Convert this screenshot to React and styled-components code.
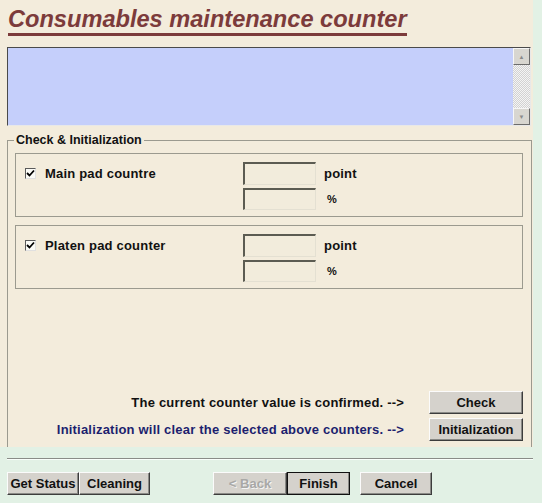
import styled, { createGlobalStyle } from "styled-components";

const GlobalStyle = createGlobalStyle`
  body {
    margin: 0;
    background: #e2f1e5;
    font-family: "Liberation Sans", Arial, sans-serif;
  }
`;

const counters = [
  { id: "main", label: "Main pad countre" },
  { id: "platen", label: "Platen pad counter" },
];

const App = () => {
  return (
    <Window>
      <GlobalStyle />
      <Panel>
        <Title>Consumables maintenance counter</Title>
        <LogBox>
          <LogText />
          <ScrollBar>
            <ScrollButton>▲</ScrollButton>
            <ScrollTrack />
            <ScrollButton>▼</ScrollButton>
          </ScrollBar>
        </LogBox>
        <Group>
          <Legend>Check &amp; Initialization</Legend>
          {counters.map(({ id, label }) => (
            <CounterBox key={id}>
              <CheckLabel>
                <CheckBox>
                  <svg width="9" height="9" viewBox="0 0 9 9">
                    <path d="M1 4 L3.5 6.5 L8 1.5" stroke="#000" strokeWidth="1.8" fill="none" />
                  </svg>
                </CheckBox>
                {label}
              </CheckLabel>
              <Field />
              <Unit>point</Unit>
              <span />
              <Field />
              <Unit $small>%</Unit>
            </CounterBox>
          ))}
          <Actions>
            <ActionRow>
              <ActionText>The current counter value is confirmed. --&gt;</ActionText>
              <Button $width={94}>Check</Button>
            </ActionRow>
            <ActionRow>
              <ActionText $navy>Initialization will clear the selected above counters. --&gt;</ActionText>
              <Button $width={94}>Initialization</Button>
            </ActionRow>
          </Actions>
        </Group>
      </Panel>
      <Separator />
      <Footer>
        <ButtonGroup>
          <Button $width={72}>Get Status</Button>
          <Button $width={71}>Cleaning</Button>
        </ButtonGroup>
        <ButtonGroup $gap={10}>
          <ButtonGroup>
            <Button $width={74} disabled>&lt; Back</Button>
            <Button $width={63} $default>Finish</Button>
          </ButtonGroup>
          <Button $width={72}>Cancel</Button>
        </ButtonGroup>
      </Footer>
    </Window>
  );
};

export default App;

const Window = styled.div`
  width: 542px;
  height: 503px;
  background: #e2f1e5;
  overflow: hidden;
`;

const Panel = styled.div`
  width: 533px;
  height: 447px;
  background: #f3ecdc;
  display: flex;
  flex-direction: column;
  box-sizing: border-box;
  padding-top: 6px;
`;

const Title = styled.h1`
  align-self: flex-start;
  margin: 0 0 0 8px;
  padding-bottom: 1px;
  font-size: 23.6px;
  font-weight: 700;
  font-style: italic;
  line-height: 26px;
  color: #7c3b3b;
  border-bottom: 3px solid #7c3b3b;
`;

const LogBox = styled.div`
  display: flex;
  margin: 11px 0 0 7px;
  width: 524px;
  height: 79px;
  box-sizing: border-box;
  border: 1px solid;
  border-color: #4a4a4a #e8e8e8 #e8e8e8 #4a4a4a;
`;

const LogText = styled.div`
  flex: 1;
  background: #c5cffb;
`;

const ScrollBar = styled.div`
  width: 17px;
  display: flex;
  flex-direction: column;
  background: #dcdad4;
`;

const ScrollButton = styled.div`
  height: 17px;
  box-sizing: border-box;
  display: flex;
  align-items: center;
  justify-content: center;
  font-size: 6px;
  color: #8a8a8a;
  background: #d8d6d0;
  border: 1px solid;
  border-color: #f6f6f6 #6c6c6c #6c6c6c #f6f6f6;
`;

const ScrollTrack = styled.div`
  flex: 1;
  background-color: #f2f2f2;
  background-image: repeating-conic-gradient(#d2d2d2 0 25%, #f4f4f4 0 50%);
  background-size: 2px 2px;
`;

const Group = styled.div`
  position: relative;
  flex: 1;
  margin: 14px 0 0 7px;
  width: 525px;
  box-sizing: border-box;
  border: 1px solid #9b9a8f;
  border-bottom: none;
  padding: 12px 8px 6px 7px;
  display: flex;
  flex-direction: column;
  gap: 8px;
`;

const Legend = styled.span`
  position: absolute;
  top: -8px;
  left: 6px;
  padding: 0 2px;
  background: #f3ecdc;
  font-size: 12.5px;
  font-weight: 700;
  color: #111;
`;

const CounterBox = styled.div`
  height: 64px;
  box-sizing: border-box;
  border: 1px solid #9b9a8f;
  padding: 8px 0 0 9px;
  display: grid;
  grid-template-columns: 218px 73px 1fr;
  grid-template-rows: 23px 22px;
  row-gap: 3px;
  align-items: center;
`;

const CheckLabel = styled.label`
  display: flex;
  align-items: center;
  gap: 9px;
  font-size: 13px;
  font-weight: 700;
  letter-spacing: 0.2px;
  color: #111;
`;

const CheckBox = styled.span`
  width: 11px;
  height: 11px;
  box-sizing: border-box;
  display: flex;
  align-items: center;
  justify-content: center;
  background: #fbfbf6;
  border: 1px solid;
  border-color: #5a5a5a #e0e0e0 #e0e0e0 #5a5a5a;
`;

const Field = styled.div`
  height: 100%;
  box-sizing: border-box;
  background: #f2ecdc;
  border: 1px solid;
  border-width: 2px 1px 1px 2px;
  border-color: #5c5c52 #e4e0d2 #e4e0d2 #5c5c52;
`;

const Unit = styled.span`
  padding-left: ${({ $small }) => ($small ? "11px" : "8px")};
  font-size: ${({ $small }) => ($small ? "11px" : "13px")};
  font-weight: 700;
  letter-spacing: 0.2px;
  color: #111;
`;

const Actions = styled.div`
  margin-top: auto;
  display: flex;
  flex-direction: column;
  gap: 4px;
`;

const ActionRow = styled.div`
  display: flex;
  justify-content: flex-end;
  align-items: center;
  gap: 25px;
`;

const ActionText = styled.span`
  font-size: 13px;
  font-weight: 700;
  letter-spacing: 0.2px;
  color: ${({ $navy }) => ($navy ? "#1c1f6e" : "#111")};
`;

const Button = styled.button`
  width: ${({ $width }) => $width}px;
  height: 23px;
  box-sizing: border-box;
  padding: 0;
  font-family: "Liberation Sans", Arial, sans-serif;
  font-size: 13px;
  font-weight: 700;
  color: #111;
  background: #d5d2cc;
  border: 1px solid;
  border-color: #fbfbfb #3c3c3c #3c3c3c #fbfbfb;
  box-shadow: inset -1px -1px #8a8a86;
  outline: ${({ $default }) => ($default ? "1px solid #111" : "none")};
  outline-offset: -1px;

  &:disabled {
    color: #a8a8a6;
    text-shadow: 1px 1px #f4f4f4;
  }
`;

const Separator = styled.div`
  margin: 11px 9px 0 7px;
  height: 1px;
  background: #8a8c88;
  box-shadow: 0 1px #fafffb;
`;

const Footer = styled.div`
  display: flex;
  gap: 63px;
  padding: 13px 0 0 7px;
`;

const ButtonGroup = styled.div`
  display: flex;
  gap: ${({ $gap }) => $gap || 0}px;
`;
